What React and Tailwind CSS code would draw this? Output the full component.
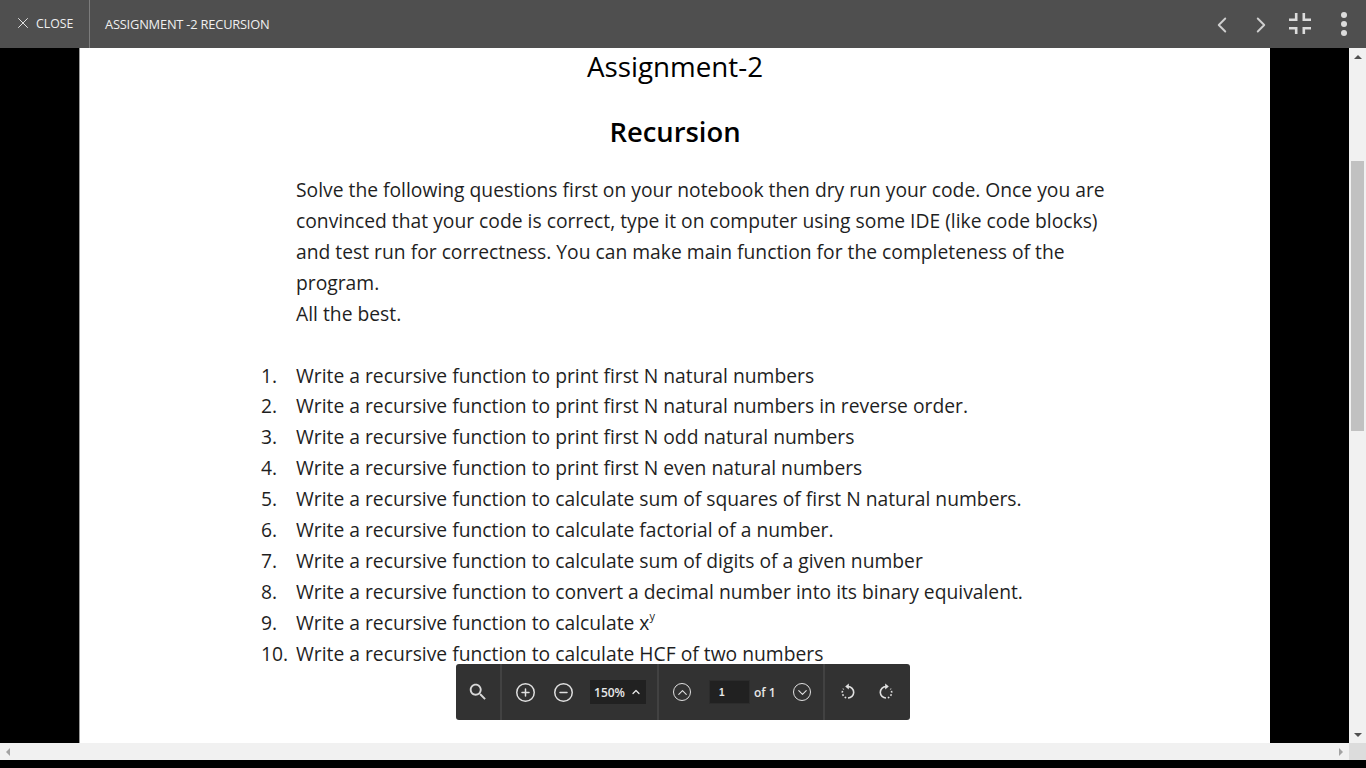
import { CirclePlus, CircleMinus, ChevronUp, ChevronDown, X, ChevronLeft, ChevronRight } from 'lucide-react';

const QUESTIONS = [
  'Write a recursive function to print first N natural numbers',
  'Write a recursive function to print first N natural numbers in reverse order.',
  'Write a recursive function to print first N odd natural numbers',
  'Write a recursive function to print first N even natural numbers',
  'Write a recursive function to calculate sum of squares of first N natural numbers.',
  'Write a recursive function to calculate factorial of a number.',
  'Write a recursive function to calculate sum of digits of a given number',
  'Write a recursive function to convert a decimal number into its binary equivalent.',
  <>Write a recursive function to calculate x<sup className="text-[11px] leading-none align-[4px]">y</sup></>,
  'Write a recursive function to calculate HCF of two numbers',
];

function ExitFullscreen() {
  return (
    <svg width="24" height="24" viewBox="0 0 24 24" fill="none" stroke="#dcdcdc" strokeWidth="2.6">
      <path d="M1 7.7H8.2V1M15.8 1V7.7H23M1 16.3H8.2V22M15.8 22V16.3H23" />
    </svg>
  );
}

function SearchIcon() {
  return (
    <svg width="22" height="22" viewBox="0 0 24 24" fill="#d8d8d8">
      <path d="M15.5 14h-.79l-.28-.27C15.41 12.59 16 11.11 16 9.5 16 5.91 13.09 3 9.5 3S3 5.91 3 9.5 5.91 16 9.5 16c1.61 0 3.09-.59 4.23-1.57l.27.28v.79l5 4.99L20.49 19l-4.99-5zm-6 0C7.01 14 5 11.99 5 9.5S7.01 5 9.5 5 14 7.01 14 9.5 11.99 14 9.5 14z" />
    </svg>
  );
}

function RotateIcon({ flip }) {
  return (
    <svg width="18" height="18" viewBox="0 0 18 18" fill="none" stroke="#e0e0e0" strokeWidth="1.6" className={flip ? '-scale-x-100' : ''}>
      <path d="M9 3.6A5.7 5.7 0 0 1 14.7 9.5A5.7 5.7 0 0 1 9 15" />
      <path d="M7.2 14.8A5.7 5.7 0 0 1 4.6 5.8" strokeDasharray="1.7 1.7" />
      <path d="M9.8 0.6L6.2 3.6l3.6 3z" fill="#e0e0e0" stroke="none" />
    </svg>
  );
}

function Toolbar() {
  const circle = 'w-[21px] h-[21px] text-[#e0e0e0]';
  return (
    <div className="absolute left-[456px] top-[616px] w-[454px] h-[56px] bg-[#323232] rounded-[3px] flex items-center text-[#e8e8e8] text-[12px]">
      <div className="w-[46px] h-full border-r-2 border-[#424242] flex items-center justify-center">
        <SearchIcon />
      </div>
      <div className="w-[157px] h-full border-r-2 border-[#424242] flex items-center pl-[13px]">
        <CirclePlus className={circle} strokeWidth={1.7} />
        <CircleMinus className={`${circle} ml-[17px]`} strokeWidth={1.7} />
        <div className="ml-[16px] w-[56px] h-[24px] bg-[#212121] flex items-center justify-center gap-[5px] font-semibold">
          <span className="pt-[1px]">150%</span>
          <ChevronUp className="w-[12px] h-[12px]" strokeWidth={2.5} />
        </div>
      </div>
      <div className="w-[166px] h-full border-r-2 border-[#424242] flex items-center pl-[14px]">
        <div className="w-[18px] h-[18px] flex items-center justify-center rounded-full border-[1.5px] border-[#e0e0e0]">
          <ChevronUp className="w-[15px] h-[15px] text-[#e0e0e0]" strokeWidth={1.7} />
        </div>
        <div className="ml-[18px] w-[41px] h-[24px] bg-[#212121] border border-[#2c2c2c] flex items-center pl-[9px] text-[10px] font-bold font-['Liberation_Sans',sans-serif]">1</div>
        <span className="ml-[4px] pt-[1px] w-[21px] font-semibold whitespace-nowrap">of 1</span>
        <div className="ml-[18px] w-[18px] h-[18px] flex items-center justify-center rounded-full border-[1.5px] border-[#e0e0e0]">
          <ChevronDown className="w-[15px] h-[15px] text-[#e0e0e0]" strokeWidth={1.7} />
        </div>
      </div>
      <div className="flex-1 h-full flex items-center pl-[14px] gap-[20px]">
        <RotateIcon />
        <RotateIcon flip />
      </div>
    </div>
  );
}

function VerticalScrollbar() {
  return (
    <div className="w-[17px] shrink-0 bg-[#f1f1f1] flex flex-col items-center">
      <div className="h-[17px] flex items-center justify-center">
        <div className="w-0 h-0 border-x-[4px] border-x-transparent border-b-[4px] border-b-[#505050]" />
      </div>
      <div className="mt-[96px] w-[13px] h-[270px] bg-[#c1c1c1]" />
      <div className="mt-auto h-[17px] flex items-center justify-center">
        <div className="w-0 h-0 border-x-[4px] border-x-transparent border-t-[4px] border-t-[#505050]" />
      </div>
    </div>
  );
}

export default function App() {
  return (
    <div className="w-[1366px] h-[768px] overflow-hidden bg-black flex flex-col font-['Open_Sans',sans-serif]">
      {/* Top bar */}
      <header className="h-[48px] shrink-0 bg-[#4f4f4f] flex items-center text-[#f0f0f0] text-[12.3px]">
        <div className="w-[90px] h-full border-r border-[#7c7c7c] flex items-center pl-[14px] gap-[1px]">
          <X className="w-[18px] h-[18px] -mt-[2px]" strokeWidth={1.2} />
          <span className="pt-[1px] ml-[3px]">CLOSE</span>
        </div>
        <span className="ml-[15px] pt-[1px] font-medium text-[12.85px] tracking-[-0.2px]">ASSIGNMENT -2 RECURSION</span>
        <div className="ml-auto flex items-center">
          <ChevronLeft className="mt-[2px] w-[26px] h-[26px] text-[#cfcfcf]" strokeWidth={1.75} />
          <ChevronRight className="mt-[2px] ml-[13px] w-[26px] h-[26px] text-[#cfcfcf]" strokeWidth={1.75} />
          <div className="ml-[14px]"><ExitFullscreen /></div>
          <div className="ml-[29px] mr-[19px] flex flex-col gap-[3px]">
            <div className="w-[6px] h-[6px] rounded-full bg-[#dcdcdc]" />
            <div className="w-[6px] h-[6px] rounded-full bg-[#dcdcdc]" />
            <div className="w-[6px] h-[6px] rounded-full bg-[#dcdcdc]" />
          </div>
        </div>
      </header>

      {/* Document viewer */}
      <div className="h-[695px] shrink-0 flex relative">
        <div className="flex-1 overflow-hidden pl-[79px]">
          <div className="w-[1191px] h-full bg-white border-l border-[#9a9a9a] text-[#1f1f1f] text-[19.3px] leading-[30.9px]">
            <h1 className="text-center text-[27.75px] leading-[36px] text-black">Assignment-2</h1>
            <h2 className="mt-[30px] text-center text-[27.4px] leading-[36px] font-semibold text-black">Recursion</h2>
            <div className="mt-[25px] ml-[216px] w-[830px]">
              <p>Solve the following questions first on your notebook then dry run your code. Once you are convinced that your code is correct, type it on computer using some IDE (like code blocks) and test run for correctness. You can make main function for the completeness of the program.</p>
              <p>All the best.</p>
            </div>
            <ol className="mt-[31px] ml-[181px]">
              {QUESTIONS.map((q, i) => (
                <li key={i} className="flex whitespace-nowrap">
                  <span className="w-[35px]">{i + 1}.</span>
                  <span>{q}</span>
                </li>
              ))}
            </ol>
          </div>
        </div>
        <VerticalScrollbar />
        <Toolbar />
      </div>

      {/* Horizontal scrollbar */}
      <div className="h-[17px] shrink-0 bg-[#f1f1f1] flex items-center">
        <div className="ml-[6px] w-0 h-0 border-y-[4px] border-y-transparent border-r-[4px] border-r-[#a3a3a3]" />
        <div className="ml-auto mr-[6px] w-0 h-0 border-y-[4px] border-y-transparent border-l-[4px] border-l-[#a3a3a3]" />
        <div className="w-[17px] h-full bg-[#dcdcdc]" />
      </div>
    </div>
  );
}
